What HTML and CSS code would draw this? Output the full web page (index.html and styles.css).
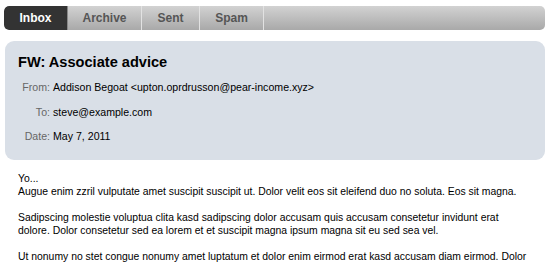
FILE: index.html
```html
<!DOCTYPE html>
<html lang="en">
<head>
    <meta charset="UTF-8">
    <title>Inbox</title>
    <link rel="stylesheet" href="styles.css">
</head>
<body>
    <!-- Onglets -->
    <div class="tabs">
        <a class="tab active" href="#">Inbox</a>
        <a class="tab" href="#">Archive</a>
        <a class="tab" href="#">Sent</a>
        <a class="tab" href="#">Spam</a>
    </div>

    <!-- En-tete du message -->
    <div class="header">
        <h1>FW: Associate advice</h1>
        <div class="fields">
            <span class="label">From:</span><span class="value">Addison Begoat &lt;upton.oprdrusson@pear-income.xyz&gt;</span>
            <span class="label">To:</span><span class="value">steve@example.com</span>
            <span class="label">Date:</span><span class="value">May 7, 2011</span>
        </div>
    </div>

    <!-- Corps du message -->
    <div class="message">
        <p>Yo...<br>Augue enim zzril vulputate amet suscipit suscipit ut. Dolor velit eos sit eleifend duo no soluta. Eos sit magna.</p>
        <p>Sadipscing molestie voluptua clita kasd sadipscing dolor accusam quis accusam consetetur invidunt erat dolore. Dolor consetetur sed ea lorem et et suscipit magna ipsum magna sit eu sed sea vel.</p>
        <p>Ut nonumy no stet congue nonumy amet luptatum et dolor enim eirmod erat kasd accusam diam eirmod. Dolor</p>
    </div>
</body>
</html>
```

FILE: styles.css
```css
body {
    font-family: "Liberation Sans", Arial, sans-serif;
    margin: 0;
    padding: 6px 5px 0 4px;
    background-color: #fff;
    color: #000;
    height: 258px;
    overflow: hidden;
}
.tabs {
    display: flex;
    height: 24px;
    background: linear-gradient(#d2d2d2, #a9a9a9);
    border-radius: 5px;
    overflow: hidden;
}
.tab {
    display: flex;
    align-items: center;
    justify-content: center;
    font-size: 12px;
    font-weight: bold;
    color: #555;
    text-decoration: none;
    border-right: 1px solid #e2e2e2;
}
.tab:nth-child(1) { width: 63px; }
.tab:nth-child(2) { width: 73px; }
.tab:nth-child(3) { width: 57px; }
.tab:nth-child(4) { width: 63px; }
.tab.active {
    background: #333;
    color: #fff;
    border-right: 1px solid #888;
    border-radius: 5px 0 0 5px;
}
.header {
    margin: 11px 0 0 1px;
    background-color: #d9dfe7;
    border-radius: 9px;
    padding: 13px 13px 13px;
    height: 93px;
}
h1 {
    margin: 0 0 11px;
    font-size: 14.6px;
    font-weight: bold;
}
.fields {
    display: grid;
    grid-template-columns: 32px auto;
    column-gap: 3px;
    row-gap: 11.5px;
    font-size: 10.6px;
    line-height: 13px;
}
.label {
    text-align: right;
    color: #666;
}
.message {
    padding: 12px 16px 0 14px;
    font-size: 10.4px;
    line-height: 13px;
}
.message p {
    margin: 0 0 13px;
}
```
